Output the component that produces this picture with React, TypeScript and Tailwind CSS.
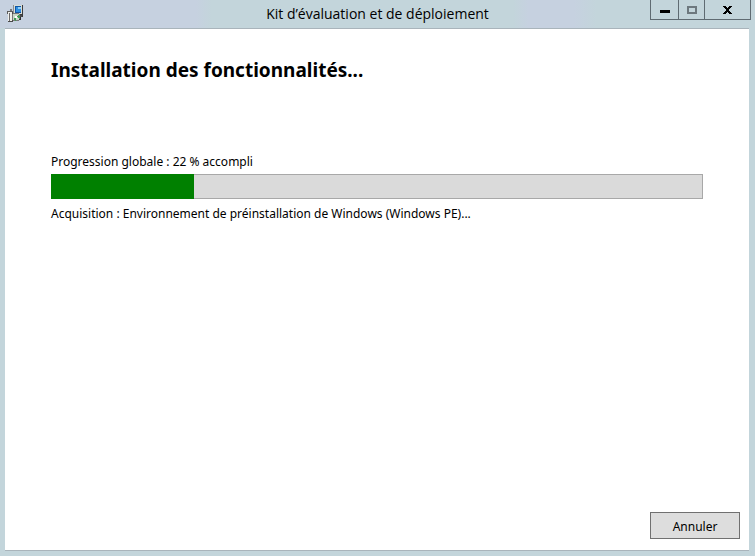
import type { ReactNode } from 'react';

const PROGRESS = 22;

interface CaptionButtonProps {
  label: string;
  className: string;
  disabled?: boolean;
  children: ReactNode;
}

function CaptionButton({ label, className, disabled, children }: CaptionButtonProps) {
  return (
    <button
      type="button"
      aria-label={label}
      disabled={disabled}
      className={`flex h-5 items-center justify-center border-b border-l border-[#5f6b72] ${className}`}
    >
      {children}
    </button>
  );
}

function InstallerIcon() {
  return (
    <svg width="16" height="17" viewBox="0 0 16 17" shapeRendering="crispEdges" aria-hidden="true">
      {/* monitor */}
      <rect x="6" y="0" width="10" height="10" fill="#d8dcd6" />
      <rect x="6" y="0" width="1" height="10" fill="#8b8f90" />
      <rect x="15" y="0" width="1" height="12" fill="#3c3c3c" />
      <rect x="6" y="9" width="10" height="1" fill="#3c3c3c" />
      <rect x="8" y="1" width="6" height="7" fill="#0f55a5" />
      <rect x="9" y="2" width="5" height="5" fill="#2f8fe0" />
      <rect x="11" y="2" width="3" height="2" fill="#8fd0fa" />
      <rect x="9" y="10" width="6" height="2" fill="#4a4a4a" />
      {/* box */}
      <rect x="1" y="7" width="4" height="9" fill="#eeeeea" />
      <rect x="0" y="6" width="6" height="1" fill="#5c5c5c" />
      <rect x="0" y="7" width="1" height="2" fill="#5c5c5c" />
      <rect x="3" y="4" width="2" height="2" fill="#77797a" />
      <rect x="2" y="8" width="1" height="8" fill="#6a6a6a" />
      <rect x="5" y="7" width="1" height="9" fill="#4a4a4a" />
      <rect x="1" y="16" width="5" height="1" fill="#4a4a4a" />
      {/* disc */}
      <circle cx="9" cy="12" r="4" fill="#c9d6c6" stroke="#777" />
      <path d="M9 12 L12 9 L13 13 Z M9 12 L9 16 L6 14 Z" fill="#3d9b54" />
      <rect x="8" y="11" width="2" height="2" fill="#fff" />
      <rect x="12" y="14" width="2" height="1" fill="#333" />
      <rect x="13" y="12" width="1" height="2" fill="#333" />
    </svg>
  );
}

export default function App() {
  return (
    <div className="flex min-h-screen flex-col bg-[#c3d5db] font-['Noto_Sans','Open_Sans',sans-serif] text-black">
      <header className="grid h-7 grid-cols-[1fr_auto_1fr] items-start bg-[linear-gradient(to_right,#c6d1e0_0_26%,#c3d5db_28%_68%,#c6d1e0_70%_76%,#c3d5db_79%)]">
        <div className="pt-[5px] pl-[7px]">
          <InstallerIcon />
        </div>
        <h1 className="font-['Open_Sans','Noto_Sans',sans-serif] text-[14px] leading-7">
          Kit d’évaluation et de déploiement
        </h1>
        <div className="mr-1 flex justify-self-end border-r border-[#5f6b72]">
          <CaptionButton label="Réduire" className="w-7">
            <span className="mt-1 h-[3px] w-2.5 bg-black" />
          </CaptionButton>
          <CaptionButton label="Agrandir" className="w-[26px]" disabled>
            <span className="h-2 w-2.5 border-2 border-[#6d787e]" />
          </CaptionButton>
          <CaptionButton label="Fermer" className="w-[46px]">
            <svg width="9" height="8" viewBox="0 0 9 8" shapeRendering="crispEdges" aria-hidden="true">
              <path d="M0 0h3v1h1v1h1V1h1V0h3v1H8v1H7v1H6v2h1v1h1v1h1v1H6V7H5V6H4v1H3v1H0V7h1V6h1V5h1V3H2V2H1V1H0z" fill="#000" />
            </svg>
          </CaptionButton>
        </div>
      </header>

      <main className="mr-1.5 mb-[5px] ml-[5px] flex flex-1 flex-col border-t border-b border-[#a9b4bb] bg-white">
        <div className="pr-[46px] pl-[46px]">
          <h2 className="pt-[27px] text-[19px] leading-7 font-bold">Installation des fonctionnalités...</h2>
          <p id="progress-label" className="pt-17 text-[12px] leading-5">
            Progression globale : {PROGRESS} % accompli
          </p>
          <div
            role="progressbar"
            aria-labelledby="progress-label"
            aria-valuenow={PROGRESS}
            aria-valuemin={0}
            aria-valuemax={100}
            className="mt-0.5 h-[25px] border border-[#a8a8a8] bg-[#dadada]"
          >
            <div className="-m-px h-[25px] bg-[#008000]" style={{ width: `${PROGRESS}%` }} />
          </div>
          <p className="pt-[5px] text-[12px] leading-5">
            Acquisition : Environnement de préinstallation de Windows (Windows PE)...
          </p>
        </div>
        <footer className="mt-auto flex justify-end pr-[9px] pb-[11px]">
          <button type="button" className="h-[27px] w-[90px] border border-[#707070] bg-[#dddddd] pt-0.5 text-[12px]">
            Annuler
          </button>
        </footer>
      </main>
    </div>
  );
}
